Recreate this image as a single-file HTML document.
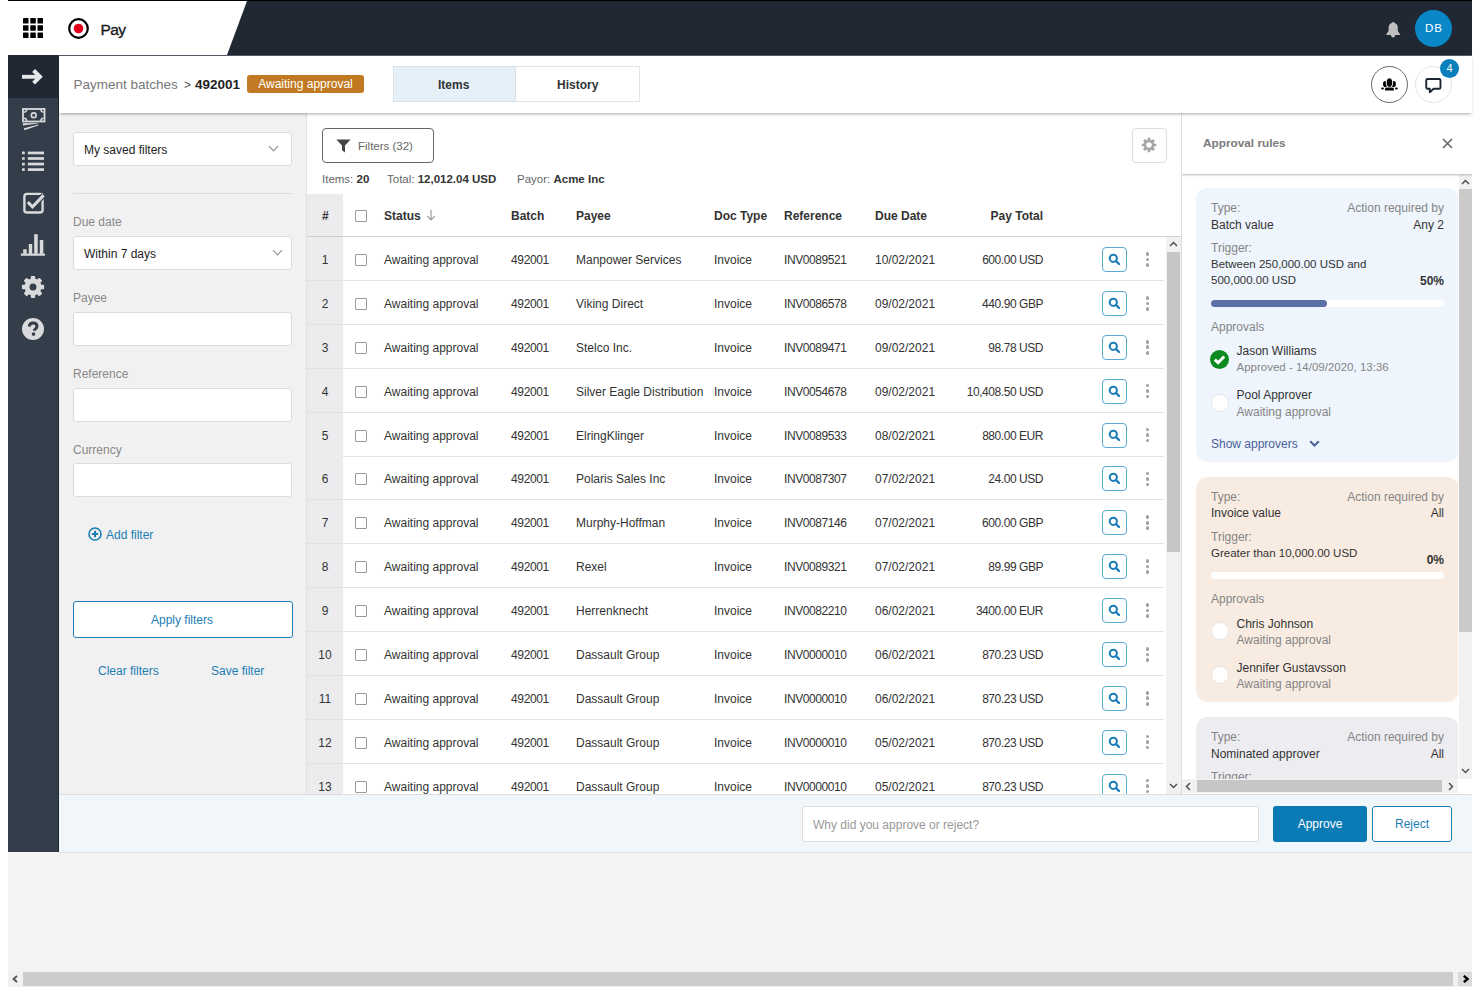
<!DOCTYPE html>
<html><head><meta charset="utf-8">
<style>
*{box-sizing:border-box;margin:0;padding:0}
html,body{width:1480px;height:987px;overflow:hidden;background:#fff;font-family:"Liberation Sans",sans-serif;color:#333;font-size:12px}
.a{position:absolute}
#topline{left:8px;top:0;width:1464px;height:1px;background:#000}
#hdr{left:8px;top:1px;width:1464px;height:54px;background:#fff;overflow:hidden}
#side{left:8px;top:55px;width:51px;height:797px;background:#343e4a;border-right:1px solid #1f2731}
#sidetop{left:0;top:0;width:50px;height:43px;background:#1f2833}
#sub{left:59px;top:55px;width:1413px;height:58px;background:#fff;box-shadow:0 2px 3px -1px rgba(0,0,0,.35);z-index:3}
#filt{left:59px;top:113px;width:248px;height:681px;background:#f1f1f1;border-right:1px solid #e0e0e0}
#tbl{left:307px;top:113px;width:874px;height:681px;background:#fff;overflow:hidden}
#appr{left:1181px;top:113px;width:291px;height:681px;background:#fff;border-left:1px solid #dedede;overflow:hidden}
#foot{left:59px;top:794px;width:1413px;height:59px;background:#f0f6f9;border-top:1px solid #dcdcdc;border-bottom:1px solid #dcdcdc;z-index:4}
#below{left:8px;top:852px;width:1464px;height:120px;background:#f4f4f4}
#hscroll{left:8px;top:971px;width:1464px;height:16px;background:#f1f1f1}
.t{position:absolute;white-space:nowrap;line-height:1}
/* filter panel */
.inp{position:absolute;left:14px;width:219px;height:34px;background:#fff;border:1px solid #dcdcdc;border-radius:3px}
.inp span{position:absolute;left:10px;top:10px;font-size:12px;color:#222}
.chev{position:absolute;right:14px;top:10px;width:7px;height:7px;border-right:1px solid #888;border-bottom:1px solid #888;transform:rotate(45deg)}
.lbl{position:absolute;left:14px;font-size:12px;color:#888}
.link{color:#1d7db5}
/* table */
.row{position:absolute;left:0;width:857px;height:44px;border-bottom:1px solid #e2e2e2}
.num{position:absolute;left:0;top:0;width:36px;height:43px;background:#ececef;text-align:center;line-height:46px;font-size:12px;color:#333}
.cb{position:absolute;top:17px;width:12px;height:12px;border:1px solid #9a9a9a;border-radius:1px;background:#fff}
.c{position:absolute;top:17px;font-size:12px;line-height:1;white-space:nowrap;color:#333}
.c.r{left:auto}
.sbtn{position:absolute;top:10px;width:25px;height:25px;border:1.3px solid #5aa9d5;border-radius:4px;background:#fff;display:flex;align-items:center;justify-content:center}
.keb{position:absolute;top:15.2px;width:3.6px;height:17px}
.keb i{display:block;width:3.6px;height:3.6px;border-radius:50%;background:#a0a0a0;margin-bottom:1.9px}
.hc{position:absolute;top:97px;font-size:12px;font-weight:bold;color:#333;line-height:1;white-space:nowrap}
/* approval */
.card{position:absolute;left:14px;width:263px;border-radius:12px}
.card .t{font-size:11.5px}
.g{color:#858585}
.dk{color:#333}
.circ{position:absolute;left:14px;width:18px;height:18px;border-radius:50%;background:#fff;border:1px solid #ebe6e2}
.sa{color:#4a6096}

</style></head><body>
<div class="a" id="topline"></div>
<div class="a" style="left:59px;top:55px;width:1413px;height:1px;background:#505a64;z-index:6"></div>
<div class="a" id="hdr">
  <svg class="a" style="left:15px;top:17px" width="20" height="20" viewBox="0 0 20 20" fill="#000">
    <rect x="0" y="0" width="5.5" height="5.5" rx=".6"/><rect x="7.3" y="0" width="5.5" height="5.5" rx=".6"/><rect x="14.5" y="0" width="5.5" height="5.5" rx=".6"/>
    <rect x="0" y="7.3" width="5.5" height="5.5" rx=".6"/><rect x="7.3" y="7.3" width="5.5" height="5.5" rx=".6"/><rect x="14.5" y="7.3" width="5.5" height="5.5" rx=".6"/>
    <rect x="0" y="14.5" width="5.5" height="5.5" rx=".6"/><rect x="7.3" y="14.5" width="5.5" height="5.5" rx=".6"/><rect x="14.5" y="14.5" width="5.5" height="5.5" rx=".6"/>
  </svg>
  <svg class="a" style="left:60px;top:17px" width="21" height="21" viewBox="0 0 21 21"><circle cx="10.5" cy="10.5" r="9.3" fill="#fff" stroke="#000" stroke-width="2.2"/><circle cx="10.5" cy="10.5" r="4.8" fill="#e3001b"/></svg>
  <div class="t" style="left:92.4px;top:20.8px;font-size:15.5px;letter-spacing:-0.6px;color:#1a1a1a;-webkit-text-stroke:0.35px #1a1a1a">Pay</div>
  <div class="a" style="left:0;top:0;width:1464px;height:54px;background:#1f2833;clip-path:polygon(239px 0,1464px 0,1464px 54px,219px 54px)"></div>
  <svg class="a" style="left:1377px;top:20px" width="17" height="18" viewBox="0 0 17 18"><path d="M8.1 0.8c.6 0 1 .4 1.1.9 2.3.5 3.6 2.5 3.6 4.8v3.3l2.6 4.3H1l2.6-4.3V6.5c0-2.3 1.3-4.3 3.6-4.8.1-.5.5-.9 1.1-.9zM5.9 13.6h4.4c0 1.7-.9 3-2.2 3s-2.2-1.3-2.2-3z" fill="#bfbfbf"/></svg>
  <div class="a" style="left:1407px;top:9px;width:37px;height:37px;border-radius:50%;background:#0a87c9"></div><div class="t" style="left:1407px;width:37px;text-align:center;top:22.2px;font-size:11.5px;letter-spacing:1px;text-indent:1px;color:#fff">DB</div>
</div>
<div class="a" id="side">
  <div class="a" id="sidetop"></div>
  <svg class="a" style="left:14px;top:14px" width="22" height="16" viewBox="0 0 22 16"><path d="M0 7.8h17" fill="none" stroke="#e6e7e9" stroke-width="3.9"/><path d="M11.6 1.5 18 7.8 11.6 14.1" fill="none" stroke="#e6e7e9" stroke-width="4" stroke-linejoin="miter"/></svg>
  <svg class="a" style="left:14px;top:53px" width="24" height="23" viewBox="0 0 24 23"><rect x="1" y="1" width="21.5" height="12.5" fill="none" stroke="#d9dadc" stroke-width="1.8"/><circle cx="11.75" cy="7.25" r="2.4" fill="none" stroke="#d9dadc" stroke-width="1.6"/><path d="M2 4.2c1.6 0 2.6-1 2.6-2.6M21.5 4.2c-1.6 0-2.6-1-2.6-2.6M2 10.3c1.6 0 2.6 1 2.6 2.6M21.5 10.3c-1.6 0-2.6 1-2.6 2.6" fill="none" stroke="#d9dadc" stroke-width="1.4"/><path d="M0.7 15.2 15.8 14.9 15.9 15.6 1 17.4zM1.9 20.2 16.3 16.5 16.6 17.2 2.6 22.3z" fill="#d9dadc"/></svg>
  <svg class="a" style="left:14px;top:96px" width="22" height="21" viewBox="0 0 22 21" fill="#d9dadc"><rect x="0" y="0.60" width="2.8" height="2.7" rx=".6"/><rect x="5.8" y="0.60" width="16.2" height="2.7"/><rect x="0" y="6.15" width="2.8" height="2.7" rx=".6"/><rect x="5.8" y="6.15" width="16.2" height="2.7"/><rect x="0" y="11.70" width="2.8" height="2.7" rx=".6"/><rect x="5.8" y="11.70" width="16.2" height="2.7"/><rect x="0" y="17.25" width="2.8" height="2.7" rx=".6"/><rect x="5.8" y="17.25" width="16.2" height="2.7"/></svg>
  <svg class="a" style="left:14px;top:137px" width="24" height="22" viewBox="0 0 24 22"><rect x="2.4" y="1.9" width="18.2" height="18.6" rx="2.6" fill="none" stroke="#d9dadc" stroke-width="2.4"/><path d="M5.8 10.1 10.5 14.8 21.6 3.4" fill="none" stroke="#343e4a" stroke-width="5.5"/><path d="M5.8 10.1 10.5 14.8 21.6 3.4" fill="none" stroke="#d9dadc" stroke-width="3"/></svg>
  <svg class="a" style="left:12px;top:178px" width="26" height="23" viewBox="0 0 26 23" fill="#d9dadc"><rect x="0.8" y="20.4" width="24.2" height="2.4" rx=".6"/><rect x="3.2" y="16.3" width="3.5" height="4.5"/><rect x="8.8" y="11" width="3.4" height="9.8"/><rect x="14.2" y="1.2" width="3.5" height="19.6"/><rect x="19.8" y="7" width="3.5" height="13.8"/></svg>
  <svg class="a" style="left:13px;top:220px" width="24" height="24" viewBox="0 0 24 24" fill="#d9dadc"><circle cx="12" cy="12" r="6" fill="none" stroke="#d9dadc" stroke-width="5"/><rect x="9.8" y="0.9" width="4.4" height="5.6" rx="1" transform="rotate(0 12 12)"/><rect x="9.8" y="0.9" width="4.4" height="5.6" rx="1" transform="rotate(45 12 12)"/><rect x="9.8" y="0.9" width="4.4" height="5.6" rx="1" transform="rotate(90 12 12)"/><rect x="9.8" y="0.9" width="4.4" height="5.6" rx="1" transform="rotate(135 12 12)"/><rect x="9.8" y="0.9" width="4.4" height="5.6" rx="1" transform="rotate(180 12 12)"/><rect x="9.8" y="0.9" width="4.4" height="5.6" rx="1" transform="rotate(225 12 12)"/><rect x="9.8" y="0.9" width="4.4" height="5.6" rx="1" transform="rotate(270 12 12)"/><rect x="9.8" y="0.9" width="4.4" height="5.6" rx="1" transform="rotate(315 12 12)"/></svg>
  <svg class="a" style="left:14px;top:263px" width="22" height="22" viewBox="0 0 22 22"><circle cx="11" cy="11" r="11" fill="#d9dadc"/><path d="M7.4 8.6c0-2.2 1.6-3.6 3.8-3.6s3.8 1.3 3.8 3.2c0 2.5-2.7 2.6-2.7 4.6" fill="none" stroke="#343e4a" stroke-width="3"/><rect x="9.9" y="14.6" width="3.2" height="3" fill="#343e4a"/></svg>
</div>
<div class="a" id="sub">
  <div class="t" style="left:14.5px;top:77.7px;margin-top:-55px;font-size:13.5px;color:#777">Payment batches</div>
  <div class="t" style="left:125px;top:24px;font-size:12px;color:#555">&gt;</div>
  <div class="t" style="left:136px;top:22.6px;font-size:13.5px;font-weight:bold;color:#222">492001</div>
  <div class="a" style="left:188px;top:20px;width:117px;height:18px;border-radius:3px;background:#c17a21;color:#fff;font-size:12px;line-height:19px;text-align:center">Awaiting approval</div>
  <div class="a" style="left:334px;top:11px;width:247px;height:36px;border:1px solid #dde3e8;background:#fff"></div>
  <div class="a" style="left:335px;top:12px;width:122px;height:34px;background:#e5f0f8;border-right:1px solid #d6e2ec"></div>
  <div class="t" style="left:379px;top:24px;font-size:12px;font-weight:bold;color:#333">Items</div>
  <div class="t" style="left:498px;top:24px;font-size:12px;font-weight:bold;color:#333">History</div>
  <div class="a" style="left:1312px;top:11px;width:37px;height:37px;border-radius:50%;border:1.4px solid #6a6a6a;background:#fff"></div>
  <svg class="a" style="left:1321px;top:22px" width="19" height="15" viewBox="0 0 19 15"><ellipse cx="5.3" cy="7.1" rx="2.3" ry="3.1" fill="#000"/><ellipse cx="13.6" cy="7.1" rx="2.3" ry="3.1" fill="#000"/><ellipse cx="9.45" cy="5.6" rx="3.2" ry="4.7" fill="#000" stroke="#fff" stroke-width="1"/><rect x="1.1" y="10.5" width="2.8" height="2" rx="1" fill="#000"/><rect x="15" y="10.5" width="2.8" height="2" rx="1" fill="#000"/><path d="M5 13.6v-1.8c0-.8 1.2-1.2 4.45-1.2s4.45.4 4.45 1.2v1.8z" fill="#000"/></svg>
  <div class="a" style="left:1356px;top:11px;width:37px;height:37px;border-radius:50%;border:1px solid #e4e4e4;background:#fff"></div>
  <svg class="a" style="left:1365px;top:21px" width="19" height="18" viewBox="0 0 19 18"><path d="M3.5 2.95h11.7c.7 0 1.25.55 1.25 1.25v7.3c0 .7-.55 1.25-1.25 1.25H9.6L5.8 16.2v-3.45H3.5c-.7 0-1.25-.55-1.25-1.25V4.2c0-.7.55-1.25 1.25-1.25z" fill="none" stroke="#1d2530" stroke-width="1.9" stroke-linejoin="round"/></svg>
  <div class="a" style="left:1381px;top:4px;width:19px;height:19px;border-radius:50%;background:#0a7fbc;color:#fff;font-size:11px;text-align:center;line-height:19px">4</div>
</div>
<div class="a" id="filt">
  <div class="inp" style="top:19px"><span>My saved filters</span><i class="chev"></i></div>
  <div class="a" style="left:14px;top:80px;width:219px;height:1px;background:#dcdcdc"></div>
  <div class="lbl t" style="top:103px">Due date</div>
  <div class="inp" style="top:123px"><span>Within 7 days</span><i class="chev" style="right:10px"></i></div>
  <div class="lbl t" style="top:179px">Payee</div>
  <div class="inp" style="top:199px"></div>
  <div class="lbl t" style="top:255px">Reference</div>
  <div class="inp" style="top:275px"></div>
  <div class="lbl t" style="top:331px">Currency</div>
  <div class="inp" style="top:350px"></div>
  <svg class="a" style="left:29px;top:414px" width="14" height="14" viewBox="0 0 14 14"><circle cx="7" cy="7" r="6" fill="none" stroke="#1d7db5" stroke-width="1.6"/><path d="M7 3.8v6.4M3.8 7h6.4" stroke="#1d7db5" stroke-width="2"/></svg>
  <div class="t link" style="left:47px;top:416px;font-size:12px">Add filter</div>
  <div class="a" style="left:14px;top:488px;width:220px;height:37px;border:1px solid #1d7db5;border-radius:3px;background:#fff"></div>
  <div class="t link" style="left:92px;top:501px;font-size:12px">Apply filters</div>
  <div class="t link" style="left:39px;top:552px;font-size:12px">Clear filters</div>
  <div class="t link" style="left:152px;top:552px;font-size:12px">Save filter</div>
</div>
<div class="a" id="tbl">
  <div class="a" style="left:15px;top:15px;width:112px;height:35px;border:1px solid #666;border-radius:4px;background:#fff"></div>
  <svg class="a" style="left:29px;top:26px" width="15" height="14" viewBox="0 0 15 14"><path d="M.4 .4h14.2L9 6.6v6.8L6 11.2V6.6z" fill="#444"/></svg>
  <div class="t" style="left:51px;top:27.5px;font-size:11.5px;color:#666">Filters (32)</div>
  <div class="t" style="left:15px;top:61px;font-size:11.5px;color:#666">Items: <b style="color:#333">20</b></div>
  <div class="t" style="left:80px;top:61px;font-size:11.5px;color:#666">Total: <b style="color:#333">12,012.04 USD</b></div>
  <div class="t" style="left:210px;top:61px;font-size:11.5px;color:#666">Payor: <b style="color:#333">Acme Inc</b></div>
  <div class="a" style="left:825px;top:15px;width:35px;height:35px;border:1px solid #ddd;border-radius:4px;background:#fff"></div>
  <svg class="a" style="left:834.2px;top:24.1px" width="16" height="16" viewBox="0 0 16 16" fill="#a6a6a6"><circle cx="8" cy="8" r="4.1" fill="none" stroke="#a6a6a6" stroke-width="2.6"/><rect x="6.7" y="0.8" width="2.6" height="4" rx=".5" transform="rotate(0 8 8)"/><rect x="6.7" y="0.8" width="2.6" height="4" rx=".5" transform="rotate(45 8 8)"/><rect x="6.7" y="0.8" width="2.6" height="4" rx=".5" transform="rotate(90 8 8)"/><rect x="6.7" y="0.8" width="2.6" height="4" rx=".5" transform="rotate(135 8 8)"/><rect x="6.7" y="0.8" width="2.6" height="4" rx=".5" transform="rotate(180 8 8)"/><rect x="6.7" y="0.8" width="2.6" height="4" rx=".5" transform="rotate(225 8 8)"/><rect x="6.7" y="0.8" width="2.6" height="4" rx=".5" transform="rotate(270 8 8)"/><rect x="6.7" y="0.8" width="2.6" height="4" rx=".5" transform="rotate(315 8 8)"/></svg>
  <!-- header row -->
  <div class="a" style="left:0;top:81px;width:36px;height:600px;background:#ececef"></div>
  <div class="a" style="left:0;top:123px;width:874px;height:1px;background:#cfcfcf"></div>
  <div class="hc" style="left:15px">#</div>
  <div class="cb" style="left:48px;top:97px"></div>
  <div class="hc" style="left:77px">Status</div>
  <svg class="a" style="left:119px;top:96px" width="10" height="12" viewBox="0 0 10 12"><path d="M5 1v10M1.3 7.2 5 11l3.7-3.8" fill="none" stroke="#999" stroke-width="1.2"/></svg>
  <div class="hc" style="left:204px">Batch</div>
  <div class="hc" style="left:269px">Payee</div>
  <div class="hc" style="left:407px">Doc Type</div>
  <div class="hc" style="left:477px">Reference</div>
  <div class="hc" style="left:568px">Due Date</div>
  <div class="hc" style="right:138px">Pay Total</div>
  <div class="row" style="top:124.0px">
<div class="num">1</div><div class="cb" style="left:48px"></div>
<div class="c" style="left:77px">Awaiting approval</div>
<div class="c" style="left:204px;letter-spacing:-0.35px">492001</div>
<div class="c" style="left:269px">Manpower Services</div>
<div class="c" style="left:407px">Invoice</div>
<div class="c" style="left:477px;letter-spacing:-0.42px">INV0089521</div>
<div class="c" style="left:568px">10/02/2021</div>
<div class="c r" style="right:121px;letter-spacing:-0.45px">600.00 USD</div>
<div class="sbtn" style="left:795px"><svg width="13" height="13" viewBox="0 0 13 13"><circle cx="5.3" cy="5.3" r="3.6" fill="none" stroke="#1a7db5" stroke-width="2"/><path d="M8 8 L11 11" stroke="#1a7db5" stroke-width="2.4" stroke-linecap="round"/></svg></div>
<div class="keb" style="left:838.5px"><i></i><i></i><i></i></div>
</div>
<div class="row" style="top:167.88px">
<div class="num">2</div><div class="cb" style="left:48px"></div>
<div class="c" style="left:77px">Awaiting approval</div>
<div class="c" style="left:204px;letter-spacing:-0.35px">492001</div>
<div class="c" style="left:269px">Viking Direct</div>
<div class="c" style="left:407px">Invoice</div>
<div class="c" style="left:477px;letter-spacing:-0.42px">INV0086578</div>
<div class="c" style="left:568px">09/02/2021</div>
<div class="c r" style="right:121px;letter-spacing:-0.45px">440.90 GBP</div>
<div class="sbtn" style="left:795px"><svg width="13" height="13" viewBox="0 0 13 13"><circle cx="5.3" cy="5.3" r="3.6" fill="none" stroke="#1a7db5" stroke-width="2"/><path d="M8 8 L11 11" stroke="#1a7db5" stroke-width="2.4" stroke-linecap="round"/></svg></div>
<div class="keb" style="left:838.5px"><i></i><i></i><i></i></div>
</div>
<div class="row" style="top:211.76px">
<div class="num">3</div><div class="cb" style="left:48px"></div>
<div class="c" style="left:77px">Awaiting approval</div>
<div class="c" style="left:204px;letter-spacing:-0.35px">492001</div>
<div class="c" style="left:269px">Stelco Inc.</div>
<div class="c" style="left:407px">Invoice</div>
<div class="c" style="left:477px;letter-spacing:-0.42px">INV0089471</div>
<div class="c" style="left:568px">09/02/2021</div>
<div class="c r" style="right:121px;letter-spacing:-0.45px">98.78 USD</div>
<div class="sbtn" style="left:795px"><svg width="13" height="13" viewBox="0 0 13 13"><circle cx="5.3" cy="5.3" r="3.6" fill="none" stroke="#1a7db5" stroke-width="2"/><path d="M8 8 L11 11" stroke="#1a7db5" stroke-width="2.4" stroke-linecap="round"/></svg></div>
<div class="keb" style="left:838.5px"><i></i><i></i><i></i></div>
</div>
<div class="row" style="top:255.64px">
<div class="num">4</div><div class="cb" style="left:48px"></div>
<div class="c" style="left:77px">Awaiting approval</div>
<div class="c" style="left:204px;letter-spacing:-0.35px">492001</div>
<div class="c" style="left:269px">Silver Eagle Distribution</div>
<div class="c" style="left:407px">Invoice</div>
<div class="c" style="left:477px;letter-spacing:-0.42px">INV0054678</div>
<div class="c" style="left:568px">09/02/2021</div>
<div class="c r" style="right:121px;letter-spacing:-0.45px">10,408.50 USD</div>
<div class="sbtn" style="left:795px"><svg width="13" height="13" viewBox="0 0 13 13"><circle cx="5.3" cy="5.3" r="3.6" fill="none" stroke="#1a7db5" stroke-width="2"/><path d="M8 8 L11 11" stroke="#1a7db5" stroke-width="2.4" stroke-linecap="round"/></svg></div>
<div class="keb" style="left:838.5px"><i></i><i></i><i></i></div>
</div>
<div class="row" style="top:299.52px">
<div class="num">5</div><div class="cb" style="left:48px"></div>
<div class="c" style="left:77px">Awaiting approval</div>
<div class="c" style="left:204px;letter-spacing:-0.35px">492001</div>
<div class="c" style="left:269px">ElringKlinger</div>
<div class="c" style="left:407px">Invoice</div>
<div class="c" style="left:477px;letter-spacing:-0.42px">INV0089533</div>
<div class="c" style="left:568px">08/02/2021</div>
<div class="c r" style="right:121px;letter-spacing:-0.45px">880.00 EUR</div>
<div class="sbtn" style="left:795px"><svg width="13" height="13" viewBox="0 0 13 13"><circle cx="5.3" cy="5.3" r="3.6" fill="none" stroke="#1a7db5" stroke-width="2"/><path d="M8 8 L11 11" stroke="#1a7db5" stroke-width="2.4" stroke-linecap="round"/></svg></div>
<div class="keb" style="left:838.5px"><i></i><i></i><i></i></div>
</div>
<div class="row" style="top:343.4px">
<div class="num">6</div><div class="cb" style="left:48px"></div>
<div class="c" style="left:77px">Awaiting approval</div>
<div class="c" style="left:204px;letter-spacing:-0.35px">492001</div>
<div class="c" style="left:269px">Polaris Sales Inc</div>
<div class="c" style="left:407px">Invoice</div>
<div class="c" style="left:477px;letter-spacing:-0.42px">INV0087307</div>
<div class="c" style="left:568px">07/02/2021</div>
<div class="c r" style="right:121px;letter-spacing:-0.45px">24.00 USD</div>
<div class="sbtn" style="left:795px"><svg width="13" height="13" viewBox="0 0 13 13"><circle cx="5.3" cy="5.3" r="3.6" fill="none" stroke="#1a7db5" stroke-width="2"/><path d="M8 8 L11 11" stroke="#1a7db5" stroke-width="2.4" stroke-linecap="round"/></svg></div>
<div class="keb" style="left:838.5px"><i></i><i></i><i></i></div>
</div>
<div class="row" style="top:387.28px">
<div class="num">7</div><div class="cb" style="left:48px"></div>
<div class="c" style="left:77px">Awaiting approval</div>
<div class="c" style="left:204px;letter-spacing:-0.35px">492001</div>
<div class="c" style="left:269px">Murphy-Hoffman</div>
<div class="c" style="left:407px">Invoice</div>
<div class="c" style="left:477px;letter-spacing:-0.42px">INV0087146</div>
<div class="c" style="left:568px">07/02/2021</div>
<div class="c r" style="right:121px;letter-spacing:-0.45px">600.00 GBP</div>
<div class="sbtn" style="left:795px"><svg width="13" height="13" viewBox="0 0 13 13"><circle cx="5.3" cy="5.3" r="3.6" fill="none" stroke="#1a7db5" stroke-width="2"/><path d="M8 8 L11 11" stroke="#1a7db5" stroke-width="2.4" stroke-linecap="round"/></svg></div>
<div class="keb" style="left:838.5px"><i></i><i></i><i></i></div>
</div>
<div class="row" style="top:431.16px">
<div class="num">8</div><div class="cb" style="left:48px"></div>
<div class="c" style="left:77px">Awaiting approval</div>
<div class="c" style="left:204px;letter-spacing:-0.35px">492001</div>
<div class="c" style="left:269px">Rexel</div>
<div class="c" style="left:407px">Invoice</div>
<div class="c" style="left:477px;letter-spacing:-0.42px">INV0089321</div>
<div class="c" style="left:568px">07/02/2021</div>
<div class="c r" style="right:121px;letter-spacing:-0.45px">89.99 GBP</div>
<div class="sbtn" style="left:795px"><svg width="13" height="13" viewBox="0 0 13 13"><circle cx="5.3" cy="5.3" r="3.6" fill="none" stroke="#1a7db5" stroke-width="2"/><path d="M8 8 L11 11" stroke="#1a7db5" stroke-width="2.4" stroke-linecap="round"/></svg></div>
<div class="keb" style="left:838.5px"><i></i><i></i><i></i></div>
</div>
<div class="row" style="top:475.04px">
<div class="num">9</div><div class="cb" style="left:48px"></div>
<div class="c" style="left:77px">Awaiting approval</div>
<div class="c" style="left:204px;letter-spacing:-0.35px">492001</div>
<div class="c" style="left:269px">Herrenknecht</div>
<div class="c" style="left:407px">Invoice</div>
<div class="c" style="left:477px;letter-spacing:-0.42px">INV0082210</div>
<div class="c" style="left:568px">06/02/2021</div>
<div class="c r" style="right:121px;letter-spacing:-0.45px">3400.00 EUR</div>
<div class="sbtn" style="left:795px"><svg width="13" height="13" viewBox="0 0 13 13"><circle cx="5.3" cy="5.3" r="3.6" fill="none" stroke="#1a7db5" stroke-width="2"/><path d="M8 8 L11 11" stroke="#1a7db5" stroke-width="2.4" stroke-linecap="round"/></svg></div>
<div class="keb" style="left:838.5px"><i></i><i></i><i></i></div>
</div>
<div class="row" style="top:518.92px">
<div class="num">10</div><div class="cb" style="left:48px"></div>
<div class="c" style="left:77px">Awaiting approval</div>
<div class="c" style="left:204px;letter-spacing:-0.35px">492001</div>
<div class="c" style="left:269px">Dassault Group</div>
<div class="c" style="left:407px">Invoice</div>
<div class="c" style="left:477px;letter-spacing:-0.42px">INV0000010</div>
<div class="c" style="left:568px">06/02/2021</div>
<div class="c r" style="right:121px;letter-spacing:-0.45px">870.23 USD</div>
<div class="sbtn" style="left:795px"><svg width="13" height="13" viewBox="0 0 13 13"><circle cx="5.3" cy="5.3" r="3.6" fill="none" stroke="#1a7db5" stroke-width="2"/><path d="M8 8 L11 11" stroke="#1a7db5" stroke-width="2.4" stroke-linecap="round"/></svg></div>
<div class="keb" style="left:838.5px"><i></i><i></i><i></i></div>
</div>
<div class="row" style="top:562.8px">
<div class="num">11</div><div class="cb" style="left:48px"></div>
<div class="c" style="left:77px">Awaiting approval</div>
<div class="c" style="left:204px;letter-spacing:-0.35px">492001</div>
<div class="c" style="left:269px">Dassault Group</div>
<div class="c" style="left:407px">Invoice</div>
<div class="c" style="left:477px;letter-spacing:-0.42px">INV0000010</div>
<div class="c" style="left:568px">06/02/2021</div>
<div class="c r" style="right:121px;letter-spacing:-0.45px">870.23 USD</div>
<div class="sbtn" style="left:795px"><svg width="13" height="13" viewBox="0 0 13 13"><circle cx="5.3" cy="5.3" r="3.6" fill="none" stroke="#1a7db5" stroke-width="2"/><path d="M8 8 L11 11" stroke="#1a7db5" stroke-width="2.4" stroke-linecap="round"/></svg></div>
<div class="keb" style="left:838.5px"><i></i><i></i><i></i></div>
</div>
<div class="row" style="top:606.68px">
<div class="num">12</div><div class="cb" style="left:48px"></div>
<div class="c" style="left:77px">Awaiting approval</div>
<div class="c" style="left:204px;letter-spacing:-0.35px">492001</div>
<div class="c" style="left:269px">Dassault Group</div>
<div class="c" style="left:407px">Invoice</div>
<div class="c" style="left:477px;letter-spacing:-0.42px">INV0000010</div>
<div class="c" style="left:568px">05/02/2021</div>
<div class="c r" style="right:121px;letter-spacing:-0.45px">870.23 USD</div>
<div class="sbtn" style="left:795px"><svg width="13" height="13" viewBox="0 0 13 13"><circle cx="5.3" cy="5.3" r="3.6" fill="none" stroke="#1a7db5" stroke-width="2"/><path d="M8 8 L11 11" stroke="#1a7db5" stroke-width="2.4" stroke-linecap="round"/></svg></div>
<div class="keb" style="left:838.5px"><i></i><i></i><i></i></div>
</div>
<div class="row" style="top:650.56px">
<div class="num">13</div><div class="cb" style="left:48px"></div>
<div class="c" style="left:77px">Awaiting approval</div>
<div class="c" style="left:204px;letter-spacing:-0.35px">492001</div>
<div class="c" style="left:269px">Dassault Group</div>
<div class="c" style="left:407px">Invoice</div>
<div class="c" style="left:477px;letter-spacing:-0.42px">INV0000010</div>
<div class="c" style="left:568px">05/02/2021</div>
<div class="c r" style="right:121px;letter-spacing:-0.45px">870.23 USD</div>
<div class="sbtn" style="left:795px"><svg width="13" height="13" viewBox="0 0 13 13"><circle cx="5.3" cy="5.3" r="3.6" fill="none" stroke="#1a7db5" stroke-width="2"/><path d="M8 8 L11 11" stroke="#1a7db5" stroke-width="2.4" stroke-linecap="round"/></svg></div>
<div class="keb" style="left:838.5px"><i></i><i></i><i></i></div>
</div>
  <!-- table scrollbar -->
  <div class="a" style="left:859px;top:124px;width:15px;height:557px;background:#f1f1f1"></div>
  <div class="a" style="left:860px;top:139px;width:13px;height:300px;background:#c6c6c6"></div>
  <svg class="a" style="left:862px;top:128px" width="9" height="6" viewBox="0 0 9 6"><path d="M1 5 4.5 1.5 8 5" fill="none" stroke="#505050" stroke-width="1.5"/></svg>
  <svg class="a" style="left:862px;top:670px" width="9" height="6" viewBox="0 0 9 6"><path d="M1 1 4.5 4.5 8 1" fill="none" stroke="#505050" stroke-width="1.5"/></svg>
</div>
<div class="a" id="appr">
  <div class="a" style="left:0;top:0;width:290px;height:61px;background:#fff;box-shadow:0 1px 2px rgba(0,0,0,.3);z-index:2"></div>
  <div class="t" style="left:21px;top:25.3px;font-size:11.8px;font-weight:bold;color:#7a7a7a;z-index:3">Approval rules</div>
  <svg class="a" style="left:260px;top:25px;z-index:3" width="11" height="11" viewBox="0 0 11 11"><path d="M1 1l9 9M10 1 1 10" stroke="#666" stroke-width="1.6"/></svg>
  <div class="a" style="left:0;top:63px;width:276px;height:603px;overflow:hidden">
    <div class="card" style="left:14px;top:12px;height:274px;background:#eef5fd"><div class="t g" style="left:15px;top:14.3px;font-size:12px">Type:</div>
<div class="t g" style="right:15px;top:14.3px;font-size:12px">Action required by</div>
<div class="t dk" style="left:15px;top:30.7px;font-size:12px">Batch value</div>
<div class="t dk" style="right:15px;top:30.7px;font-size:12px">Any 2</div>
<div class="t g" style="left:15px;top:54.4px;font-size:12px">Trigger:</div>
<div class="t dk" style="left:15px;top:71.2px;font-size:11.5px">Between 250,000.00 USD and</div>
<div class="t dk" style="left:15px;top:87.4px;font-size:11.5px">500,000.00 USD</div>
<div class="t dk" style="right:15px;top:86.9px;font-size:12px;font-weight:bold">50%</div>
<div class="a" style="left:15px;top:111.5px;width:233px;height:7px;border-radius:4px;background:#fff"></div>
<div class="a" style="left:15px;top:111.5px;width:116px;height:7px;border-radius:4px;background:#5a6fa5"></div>
<div class="t g" style="left:15px;top:132.8px;font-size:12px">Approvals</div>
<svg class="a" style="left:14px;top:161.5px" width="19" height="19" viewBox="0 0 19 19"><circle cx="9.5" cy="9.5" r="9.5" fill="#0d8a1e"/><path d="M4.8 9.6 8.1 12.7 14.2 6.5" fill="none" stroke="#fff" stroke-width="3"/></svg>
<div class="t dk" style="left:40.5px;top:157.4px;font-size:12px">Jason Williams</div>
<div class="t g" style="left:40.5px;top:174.3px;font-size:11.5px">Approved - 14/09/2020, 13:36</div>
<div class="circ" style="left:14.5px;top:206px"></div>
<div class="t dk" style="left:40.5px;top:201.2px;font-size:12px">Pool Approver</div>
<div class="t g" style="left:40.5px;top:217.6px;font-size:12px">Awaiting approval</div>
<div class="t sa" style="left:15px;top:250.1px;font-size:12px">Show approvers</div>
<svg class="a" style="left:113px;top:252px" width="11" height="7" viewBox="0 0 11 7"><path d="M1.2 1.2 5.5 5.5 9.8 1.2" fill="none" stroke="#4a6096" stroke-width="2"/></svg></div>
    <div class="card" style="left:14px;top:301px;height:225px;background:#f8ece2"><div class="t g" style="left:15px;top:14.1px;font-size:12px">Type:</div>
<div class="t g" style="right:15px;top:14.1px;font-size:12px">Action required by</div>
<div class="t dk" style="left:15px;top:29.9px;font-size:12px">Invoice value</div>
<div class="t dk" style="right:15px;top:29.9px;font-size:12px">All</div>
<div class="t g" style="left:15px;top:54.3px;font-size:12px">Trigger:</div>
<div class="t dk" style="left:15px;top:70.6px;font-size:11.5px">Greater than 10,000.00 USD</div>
<div class="t dk" style="right:15px;top:77.4px;font-size:12px;font-weight:bold">0%</div>
<div class="a" style="left:15px;top:95px;width:233px;height:7px;border-radius:4px;background:#fff"></div>
<div class="t g" style="left:15px;top:115.8px;font-size:12px">Approvals</div>
<div class="circ" style="left:14.5px;top:145px"></div>
<div class="t dk" style="left:40.5px;top:141.1px;font-size:12px">Chris Johnson</div>
<div class="t g" style="left:40.5px;top:157.2px;font-size:12px">Awaiting approval</div>
<div class="circ" style="left:14.5px;top:189px"></div>
<div class="t dk" style="left:40.5px;top:184.5px;font-size:12px">Jennifer Gustavsson</div>
<div class="t g" style="left:40.5px;top:201.0px;font-size:12px">Awaiting approval</div></div>
    <div class="card" style="left:14px;top:541px;height:200px;background:#ededf1"><div class="t g" style="left:15px;top:14.1px;font-size:12px">Type:</div>
<div class="t g" style="right:15px;top:14.1px;font-size:12px">Action required by</div>
<div class="t dk" style="left:15px;top:30.5px;font-size:12px">Nominated approver</div>
<div class="t dk" style="right:15px;top:30.5px;font-size:12px">All</div>
<div class="t g" style="left:15px;top:54.3px;font-size:12px">Trigger:</div></div>
  </div>
  <!-- panel v scrollbar -->
  <div class="a" style="left:277px;top:62px;width:13px;height:604px;background:#f1f1f1"></div>
  <div class="a" style="left:277px;top:76px;width:13px;height:443px;background:#cacaca"></div>
  <svg class="a" style="left:279px;top:66px" width="9" height="6" viewBox="0 0 9 6"><path d="M1 5 4.5 1.5 8 5" fill="none" stroke="#505050" stroke-width="1.5"/></svg>
  <svg class="a" style="left:279px;top:655px" width="9" height="6" viewBox="0 0 9 6"><path d="M1 1 4.5 4.5 8 1" fill="none" stroke="#505050" stroke-width="1.5"/></svg>
  <!-- panel h scrollbar -->
  <div class="a" style="left:0;top:666px;width:276px;height:14px;background:#f1f1f1"></div>
  <div class="a" style="left:15px;top:667px;width:245px;height:12px;background:#c6c6c6"></div>
  <svg class="a" style="left:3px;top:669px" width="6" height="9" viewBox="0 0 6 9"><path d="M5 1 1.5 4.5 5 8" fill="none" stroke="#505050" stroke-width="1.5"/></svg>
  <svg class="a" style="left:266px;top:669px" width="6" height="9" viewBox="0 0 6 9"><path d="M1 1 4.5 4.5 1 8" fill="none" stroke="#505050" stroke-width="1.5"/></svg>
</div>
<div class="a" id="foot">
  <div class="a" style="left:743px;top:11px;width:457px;height:36px;border:1px solid #dcdcdc;border-radius:3px;background:#fff"></div>
  <div class="t" style="left:754px;top:24px;font-size:12px;color:#999">Why did you approve or reject?</div>
  <div class="a" style="left:1214px;top:11px;width:94px;height:36px;border-radius:3px;background:#0b7bb5;color:#fff;font-size:12px;text-align:center;line-height:36px">Approve</div>
  <div class="a" style="left:1313px;top:11px;width:80px;height:36px;border-radius:3px;border:1px solid #1d7db5;background:#fff;color:#1d7db5;font-size:12px;text-align:center;line-height:34px">Reject</div>
</div>
<div class="a" id="below"></div>
<div class="a" id="hscroll">
  <div class="a" style="left:15px;top:1.3px;width:1430px;height:13.7px;background:#cccccc"></div>
  <div class="a" style="left:1450px;top:1.3px;width:14px;height:13.7px;background:#dadada"></div>
  <svg class="a" style="left:3px;top:4px" width="8" height="8" viewBox="0 0 8 8"><path d="M6 1 2.5 4 6 7" fill="none" stroke="#505050" stroke-width="1.8"/></svg>
  <svg class="a" style="left:1454px;top:4px" width="8" height="8" viewBox="0 0 8 8"><path d="M1.8 .8 5.6 4 1.8 7.2" fill="none" stroke="#000" stroke-width="2.3"/></svg>
</div>

</body></html>
